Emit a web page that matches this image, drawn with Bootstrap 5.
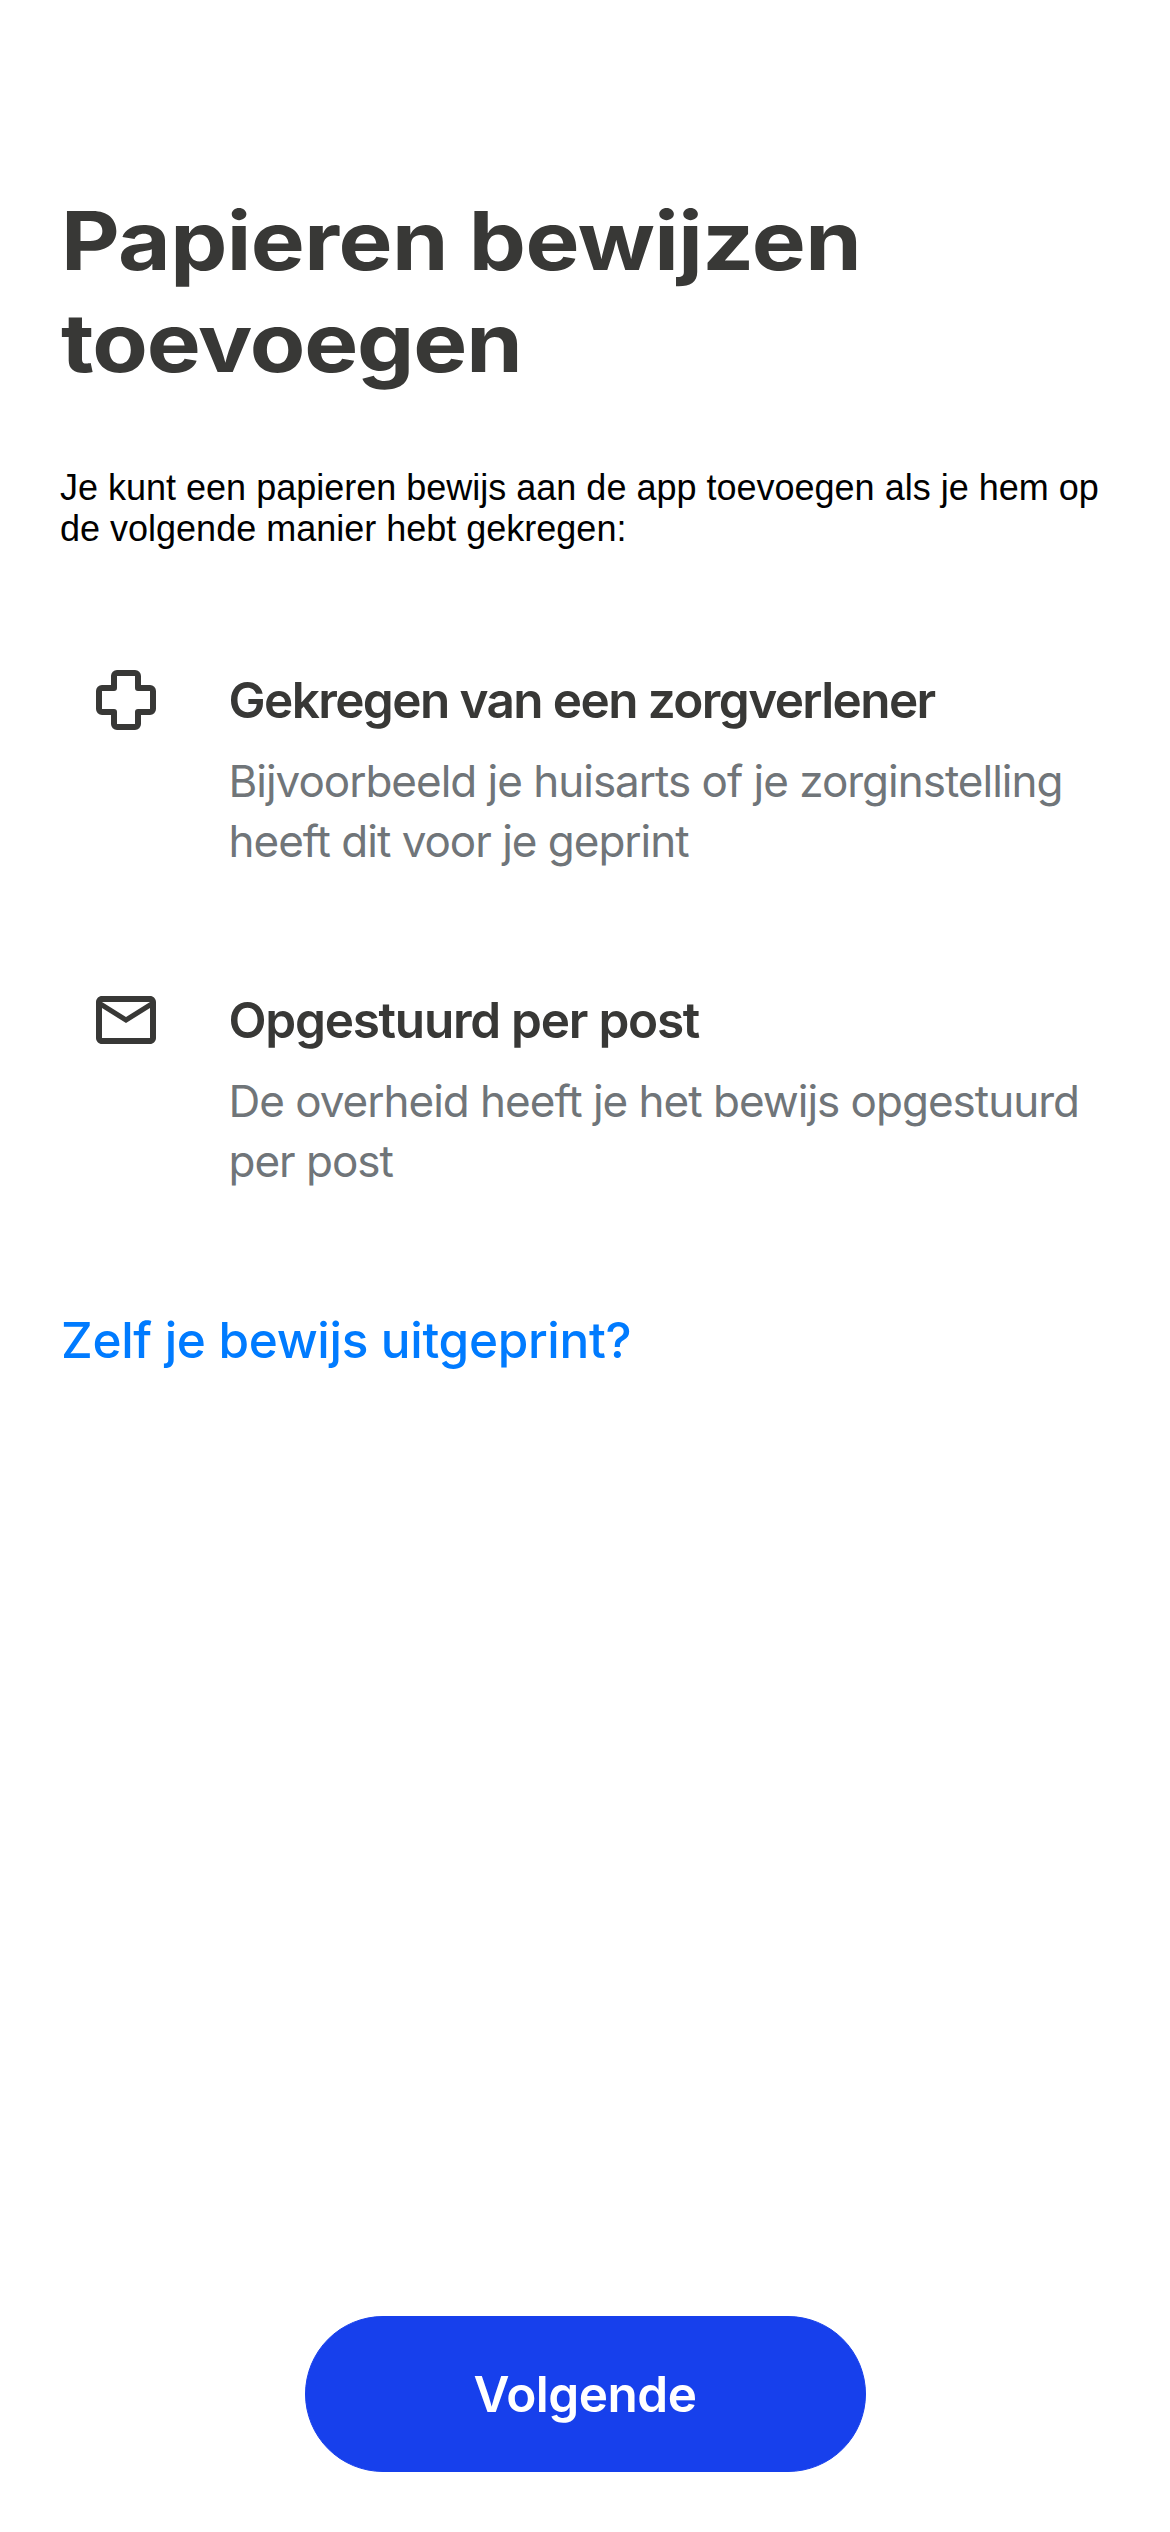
<!DOCTYPE html>
<html lang="nl">
<head>
<meta charset="utf-8">
<meta name="viewport" content="width=device-width, initial-scale=1">
<title>Papieren bewijzen toevoegen</title>
<link rel="stylesheet" href="https://cdn.jsdelivr.net/npm/bootstrap@5.3.0/dist/css/bootstrap.min.css">
<style>
  body { font-family: Inter, "Liberation Sans", sans-serif; color: #383836; background: #fff; }
  .screen { padding: 190px 60px 60px; }
  /* widened letterforms for the display heading */
  .screen-title { font-size: 81px; font-weight: 700; line-height: 102px; letter-spacing: -.5px; margin: 0 0 73px 1px; transform: scaleX(1.12); transform-origin: left; }
  .second-line { letter-spacing: -1px; }
  .intro { font-family: "Liberation Sans", Arial, sans-serif; font-size: 36px; line-height: 41px; color: #000; margin-bottom: 121px; }
  .reasons { gap: 119px; padding-left: 36px; margin-bottom: 119px; }
  .reason { gap: 72.5px; }
  .reason svg { width: 60px; height: 60px; }
  .reason-title { font-size: 49.5px; font-weight: 600; line-height: 60px; letter-spacing: -1.6px; margin-bottom: 21px; }
  .reason-title.post { letter-spacing: -1.25px; }
  .reason-text { font-size: 44px; line-height: 60px; letter-spacing: -1.01px; color: #707579; }
  .help-link { font-size: 49.5px; font-weight: 500; line-height: 60px; letter-spacing: -.32px; color: #007bff; margin-left: 1px; }
  .next-btn { --bs-btn-bg: #1740ec; --bs-btn-border-color: #1740ec; --bs-btn-hover-bg: #1236c9; width: 561px; height: 156px; font-size: 49.5px; font-weight: 600; line-height: 60px; letter-spacing: -.52px; }
</style>
</head>
<body>
<main class="screen min-vh-100 d-flex flex-column align-items-start text-nowrap">
  <h1 class="screen-title">Papieren bewijzen<br><span class="second-line">toevoegen</span></h1>
  <p class="intro">Je kunt een papieren bewijs aan de app toevoegen als je hem op<br>de volgende manier hebt gekregen:</p>

  <div class="reasons d-flex flex-column">
    <section class="reason d-flex align-items-start">
      <svg class="flex-shrink-0" viewBox="0 0 60 60" fill="none" stroke="#383836" stroke-width="6" stroke-linejoin="round" aria-hidden="true">
        <path d="M21 3H39A3 3 0 0 1 42 6V18H54A3 3 0 0 1 57 21V39A3 3 0 0 1 54 42H42V54A3 3 0 0 1 39 57H21A3 3 0 0 1 18 54V42H6A3 3 0 0 1 3 39V21A3 3 0 0 1 6 18H18V6A3 3 0 0 1 21 3Z"/>
      </svg>
      <div>
        <h2 class="reason-title">Gekregen van een zorgverlener</h2>
        <p class="reason-text mb-0">Bijvoorbeeld je huisarts of je zorginstelling<br>heeft dit voor je geprint</p>
      </div>
    </section>
    <section class="reason d-flex align-items-start">
      <svg class="flex-shrink-0" viewBox="2 2 20 20" fill="#383836" aria-hidden="true">
        <path d="M22 6c0-1.1-.9-2-2-2H4c-1.1 0-2 .9-2 2v12c0 1.1.9 2 2 2h16c1.1 0 2-.9 2-2V6zm-2 0l-8 5-8-5h16zm0 12H4V8l8 5 8-5v10z"/>
      </svg>
      <div>
        <h2 class="reason-title post">Opgestuurd per post</h2>
        <p class="reason-text mb-0">De overheid heeft je het bewijs opgestuurd<br>per post</p>
      </div>
    </section>
  </div>

  <a class="help-link text-decoration-none" href="#">Zelf je bewijs uitgeprint?</a>
  <button type="button" class="next-btn btn btn-primary rounded-pill align-self-center mt-auto">Volgende</button>
</main>
<script src="https://cdn.jsdelivr.net/npm/bootstrap@5.3.0/dist/js/bootstrap.bundle.min.js"></script>
</body>
</html>
